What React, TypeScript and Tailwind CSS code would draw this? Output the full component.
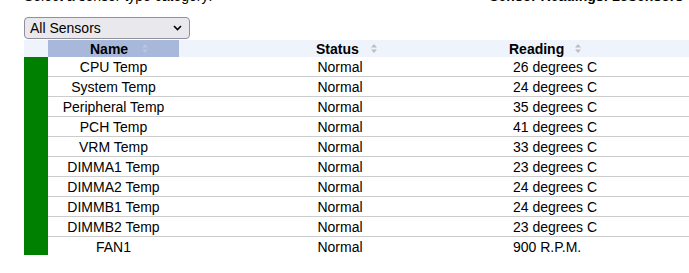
const sensors: [string, string, string][] = [
  ["CPU Temp", "Normal", "26 degrees C"],
  ["System Temp", "Normal", "24 degrees C"],
  ["Peripheral Temp", "Normal", "35 degrees C"],
  ["PCH Temp", "Normal", "41 degrees C"],
  ["VRM Temp", "Normal", "33 degrees C"],
  ["DIMMA1 Temp", "Normal", "23 degrees C"],
  ["DIMMA2 Temp", "Normal", "24 degrees C"],
  ["DIMMB1 Temp", "Normal", "24 degrees C"],
  ["DIMMB2 Temp", "Normal", "23 degrees C"],
  ["FAN1", "Normal", "900 R.P.M."],
];

function SortIcon({ color = "#bdbdbd" }: { color?: string }) {
  return (
    <svg width="6" height="9" viewBox="0 0 6 9" className="shrink-0">
      <path d="M0 3.5 L3 0 L6 3.5 Z" fill={color} />
      <path d="M0 5.5 L3 9 L6 5.5 Z" fill={color} />
    </svg>
  );
}

export default function App() {
  return (
    <div className="w-[689px] h-[273px] overflow-hidden bg-white text-black text-[14px] font-['Liberation_Sans',Arial,sans-serif]">
      {/* top line, partly scrolled out */}
      <div className="flex justify-between mt-[-12px] pl-[24px] pr-[6px] leading-4">
        <span>Select a sensor type category:</span>
        <span className="font-bold">Sensor Readings: 23Sensors</span>
      </div>

      {/* category select */}
      <div className="mt-[13px] ml-[24px] w-[166px] h-[22px] border border-[#8f8f9d] rounded-[4px] bg-[#e9e9ed] flex items-center justify-between pl-[5px] pr-[7px]">
        <span className="leading-4">All Sensors</span>
        <svg width="9" height="6" viewBox="0 0 9 6">
          <path d="M1 1 L4.5 4.5 L8 1" fill="none" stroke="#000" strokeWidth="1.6" />
        </svg>
      </div>

      {/* table */}
      <div className="mt-[1px] ml-[24px] h-[215px] overflow-hidden">
        <div className="grid grid-cols-[24px_131px_322px_1fr] h-[17px] bg-[#eef3fc] font-bold leading-4">
          <div />
          <div className="bg-[#a8b8da] flex items-center pl-[42px] gap-[14px]">
            <span>Name</span>
            <SortIcon color="#b9c5de" />
          </div>
          <div className="flex items-center pl-[137px] gap-[12px]">
            <span>Status</span>
            <SortIcon />
          </div>
          <div className="flex items-center pl-[8px] gap-[11px]">
            <span>Reading</span>
            <SortIcon />
          </div>
        </div>

        {sensors.map(([name, status, reading]) => (
          <div key={name} className="grid grid-cols-[24px_131px_322px_1fr] h-[20px] leading-4">
            <div className="bg-[#008000]" />
            <div className="border-b border-[#cccccc] text-center pt-[2px]">{name}</div>
            <div className="border-b border-[#cccccc] text-center pt-[2px]">{status}</div>
            <div className="border-b border-[#cccccc] pl-[12px] pt-[2px]">{reading}</div>
          </div>
        ))}
      </div>
    </div>
  );
}
